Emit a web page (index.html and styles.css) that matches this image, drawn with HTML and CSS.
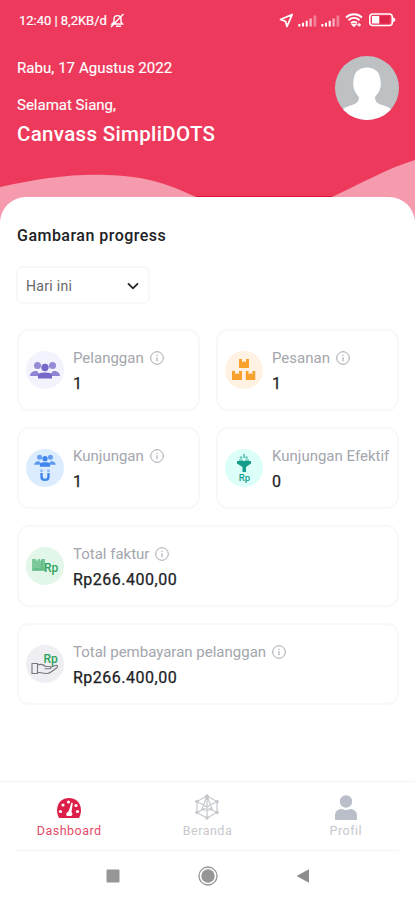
FILE: index.html
```html
<!DOCTYPE html>
<html lang="id">
<head>
<meta charset="utf-8">
<meta name="viewport" content="width=device-width, initial-scale=1">
<title>Dashboard</title>
<link rel="stylesheet" href="styles.css">
</head>
<body>
<svg class="defs" width="0" height="0" aria-hidden="true">
  <symbol id="info" viewBox="0 0 14 14"><circle cx="7" cy="7" r="6.3" fill="none" stroke="currentColor"/><path d="M7 6.3v4M7 3.7v1.2" stroke="currentColor" stroke-width="1.1"/></symbol>
  <symbol id="signal" viewBox="0 0 19 13"><path d="M.4 10h2v2.500h-2zM4 8.800h2v3.700H4zM7.700 6.800h2v5.700h-2z" fill="#fff"/><path d="M11.400 4.500h2.400v8h-2.400z" fill="#f9b0bf"/><path d="M15.500 1.500h2.800v11h-2.800z" fill="#f27e97"/></symbol>
  <symbol id="people" viewBox="0 0 30 18"><circle cx="7.500" cy="4.500" r="3.500" opacity=".75"/><circle cx="22.500" cy="4.500" r="3.500" opacity=".75"/><path d="M0 15c.3-4 3.500-5.500 7-5l4 5zM30 15c-.3-4-3.500-5.500-7-5l-4 5z" opacity=".8"/><circle cx="15" cy="6.500" r="3.700"/><path d="M8 17.500V15c0-3 3-3.500 7-3.500s7 .5 7 3.500v2.500z"/></symbol>
  <symbol id="box" viewBox="0 0 10 9"><path d="M0 0h3v3.200l2-1 2 1V0h3v9H0z"/></symbol>
</svg>
<header class="header">
  <svg class="waves" viewBox="0 0 415 62"><path d="M0 28C38 20 69 15 106 16C149 17 172 27 196 38V62H0zM332 38C356 27 388 9 415 1V62H332z" fill="#f59bad"/><path d="M196 37h136v2H196z" fill="#e0143f"/></svg>
  <div class="status">
    <span class="clock">12:40 | 8,2KB/d</span>
    <svg class="bell" width="15" height="15" viewBox="0 0 15 15" fill="none" stroke="#fff" stroke-width="1.400"><path d="M2 11h10.500L11 9V5.800C11 1.500 4 1.500 4 5.800V9zM6 13.300h5M1 14L13.500 1"/></svg>
    <span class="spacer"></span>
    <svg class="location" width="15" height="15" viewBox="0 0 15 15" fill="none" stroke="#fff" stroke-width="1.800" stroke-linejoin="round"><path d="M13.200 1.500L1.500 6.500l5 1.800L8 13.500z"/></svg>
    <svg class="signal" width="19" height="13"><use href="#signal"/></svg>
    <svg class="signal" width="19" height="13"><use href="#signal"/></svg>
    <svg class="wifi" width="18" height="14" viewBox="0 0 18 14" fill="none" stroke="#fff" stroke-width="1.900"><path d="M1 4.500C5.500.2 12.500.2 17 4.500M3.500 7.300c3.300-3 7.700-3 11 0M6 10c1.900-1.700 4.100-1.700 6 0"/><path d="M7 11.300h4L9 13.500zM14 10v3.500M12.300 11.800h3.700" fill="#fff" stroke-width="1.200"/></svg>
    <svg width="27" height="14" viewBox="0 0 27 14"><rect x=".8" y="1" width="22.500" height="11.500" rx="3" fill="none" stroke="#fff" stroke-width="1.600"/><path d="M3 3h7.500v7.500H3z" fill="#fff"/><path d="M10.500 3h10v7.500h-10z" fill="#dd254a"/><path d="M24 4.500c3 .5 3 4 0 4.500z" fill="#fff"/></svg>
  </div>
  <div class="greeting">
    <div>
      <p class="date">Rabu, 17 Agustus 2022</p>
      <p class="hello">Selamat Siang,</p>
      <h1 class="name">Canvass SimpliDOTS</h1>
    </div>
    <svg class="avatar" viewBox="0 0 64 64"><defs><clipPath id="face"><circle cx="32" cy="32" r="32"/></clipPath></defs><g clip-path="url(#face)"><path d="M0 0h64v64H0z" fill="#bdc1c4"/><path d="M19 22C20 8 44 8 45 22C46 25 46 30 45 33C44 37 41 39 40 41C40 46 43 48 47 49C52 50 55 52 57 54V66H7V54C10 51 14 50 17 49C21 48 24 46 24 41C22 39 20 36 19 33C18 30 18 25 19 22z" fill="#fff"/></g></svg>
  </div>
</header>
<main class="sheet">
  <h2 class="title">Gambaran progress</h2>
  <div class="select"><span>Hari ini</span><svg width="12" height="8" viewBox="0 0 12 8"><path d="M1 1.300l5 5 5-5" fill="none" stroke="#222" stroke-width="1.800"/></svg></div>
  <section class="cards">
    <article class="card">
      <div class="badge violet"><svg width="30" height="18" fill="#7568c8"><use href="#people"/></svg></div>
      <div class="info-text"><p class="label">Pelanggan <svg class="info"><use href="#info"/></svg></p><p class="value">1</p></div>
    </article>
    <article class="card">
      <div class="badge orange"><svg width="24" height="22" viewBox="0 0 24 22" fill="#f9a12d"><use href="#box" x="7" y="0" width="10" height="9"/><use href="#box" x="0" y="12" width="10" height="9"/><use href="#box" x="13.500" y="12" width="10" height="9"/></svg></div>
      <div class="info-text"><p class="label">Pesanan <svg class="info"><use href="#info"/></svg></p><p class="value">1</p></div>
    </article>
    <article class="card">
      <div class="badge blue"><svg width="22" height="28" viewBox="0 0 22 28" fill="#3f86ed"><use href="#people" x="0" y="0" width="22" height="13"/><path d="M7.500 19v3.500c0 4.500 7 4.500 7 0V19" fill="none" stroke="#3f86ed" stroke-width="2.400"/><path d="M6.300 15.500h2.400V18H6.300zM13.300 15.500h2.400V18h-2.400z" opacity=".5"/></svg></div>
      <div class="info-text"><p class="label">Kunjungan <svg class="info"><use href="#info"/></svg></p><p class="value">1</p></div>
    </article>
    <article class="card">
      <div class="badge teal"><svg width="16" height="30" viewBox="0 0 16 30" fill="#149d8b"><path d="M1 8h14v2.500l-5 3.500v5H6.500v-5L1 10.500z"/><circle cx="5" cy="4.500" r="1.300" opacity=".6"/><circle cx="10.500" cy="4.500" r="1.300" opacity=".6"/><path d="M3 6.500h4v1.200H3zM9 6.500h4v1.200H9zM7.300 1h1.500v4H7.300z" opacity=".7"/><text x="2.800" y="28" class="rp-small">Rp</text></svg></div>
      <div class="info-text"><p class="label">Kunjungan Efektif</p><p class="value">0</p></div>
    </article>
    <article class="card wide">
      <div class="badge green"><svg width="28" height="20" viewBox="0 0 28 20"><path d="M1 3h4v2l2-1V3h2v2l3-2h2v12H1z" fill="#7bc99b"/><path d="M3 13h10M11 3v9" stroke="#4fb47a"/><text x="13" y="16" class="rp">Rp</text></svg></div>
      <div class="info-text"><p class="label">Total faktur <svg class="info"><use href="#info"/></svg></p><p class="value">Rp266.400,00</p></div>
    </article>
    <article class="card wide">
      <div class="badge gray"><svg width="28" height="24" viewBox="0 0 28 24"><text x="12.500" y="11" class="rp">Rp</text><path d="M1 11.500h5.500v10H1zM6.500 13c4-1.500 6-.5 8 1.500h4c2 0 2 2.300 0 2.300h-5M19 15.500l5.500-2c2-.5 3 1 1 2.500L20 20c-2 1.500-3 1.800-5 1.500l-8.500-1.200" fill="none" stroke="#77787d" stroke-width="1.100"/></svg></div>
      <div class="info-text"><p class="label">Total pembayaran pelanggan <svg class="info"><use href="#info"/></svg></p><p class="value">Rp266.400,00</p></div>
    </article>
  </section>
</main>
<nav class="tabs">
  <a class="tab active"><svg width="26" height="22" viewBox="0 0 26 22"><path d="M3 21C-2 11 3 1 13 1S28 11 23 21z" fill="#dc1f49"/><g fill="#fff"><circle cx="4.500" cy="14.500" r="1.600"/><circle cx="7" cy="8" r="1.600"/><circle cx="12.500" cy="5" r="1.600"/><circle cx="20" cy="8.500" r="1.600"/><circle cx="21.500" cy="14.500" r="1.600"/><path d="M15.500 5.500l1.300.4-1.300 9c1.500 1.500 1 3.600-.5 4.100h-4c-1.500-1-1-3.500 1.500-4.600z"/></g></svg><span>Dashboard</span></a>
  <a class="tab"><svg width="26" height="26" viewBox="0 0 26 26" fill="none" stroke="#c5c8cd" stroke-width="1.200"><path d="M13 2l10 5.500v11L13 24 3 18.500v-11zM13 2v22M3 7.500l20 11M23 7.500l-20 11M13 2L7.500 16h11z"/><g fill="#c5c8cd" stroke="none"><circle cx="13" cy="2" r="1.800"/><circle cx="23" cy="7.500" r="1.800"/><circle cx="23" cy="18.500" r="1.800"/><circle cx="13" cy="24" r="1.800"/><circle cx="3" cy="18.500" r="1.800"/><circle cx="3" cy="7.500" r="1.800"/></g></svg><span>Beranda</span></a>
  <a class="tab"><svg width="22" height="25" viewBox="0 0 22 25" fill="#b9bec9"><circle cx="11" cy="6.500" r="6.200"/><path d="M0 24v-3c0-5 3-7 7-7 2.500 1.200 5.500 1.200 8 0 4 0 7 2 7 7v3q0 1-1 1H1q-1 0-1-1z"/></svg><span>Profil</span></a>
</nav>
<footer class="system">
  <svg width="14" height="14" viewBox="0 0 14 14"><rect x=".5" y=".5" width="13" height="13" rx="1" fill="#969696"/></svg>
  <svg width="20" height="20" viewBox="0 0 20 20"><circle cx="10" cy="10" r="9" fill="none" stroke="#969696" stroke-width="1.300"/><circle cx="10" cy="10" r="6.700" fill="#969696"/></svg>
  <svg width="14" height="14" viewBox="0 0 14 14"><path d="M.5 7L13 .2v13.600z" fill="#8d8d8d"/></svg>
</footer>
</body>
</html>
```
FILE: styles.css
```css
* { box-sizing: border-box; }
body { margin: 0; width: 415px; height: 900px; overflow: hidden; display: flex; flex-direction: column; background: #fff; font-family: Roboto, "Liberation Sans", sans-serif; color: #202124; }
p, h1, h2 { margin: 0; }
svg { display: block; flex: none; }
.defs { position: absolute; }
.header { position: relative; height: 221px; flex: none; background: #ed3a5c; color: #fff; }
.waves { position: absolute; left: 0; bottom: 0; width: 415px; height: 62px; }
.status { position: relative; display: flex; align-items: center; height: 40px; padding: 0 19px 0 19px; }
.clock { font-size: 13px; letter-spacing: -.02px; -webkit-text-stroke: .2px #fff; }
.bell { margin-left: 3px; }
.spacer { flex: 1; }
.signal { margin-left: 4px; }
.wifi { margin: 0 6px 0 5px; }
.greeting { position: relative; display: flex; justify-content: space-between; padding: 16px 16px 0 17px; }
.date, .hello { font-size: 15px; line-height: 22px; -webkit-text-stroke: .15px; }
.date { margin-top: 1px; letter-spacing: .06px; }
.hello { margin-top: 15px; }
.name { font-size: 20.5px; line-height: 28px; margin-top: 4px; font-weight: 500; letter-spacing: .33px; }
.avatar { width: 64px; height: 64px; }
.sheet { position: relative; flex: none; height: 584px; margin-top: -24px; padding: 27px 16px 0 17px; background: #fff; border-radius: 26px 26px 0 0; }
.title { font-size: 16px; line-height: 24px; font-weight: 500; letter-spacing: .48px; }
.select { display: flex; align-items: center; justify-content: space-between; width: 134px; height: 38px; margin: 18px 0 0 -1px; padding: 1px 9px 0 8px; border: 2px solid #f8f8f9; border-radius: 6px; font-size: 14px; color: #66676a; letter-spacing: .3px; }
.cards { display: grid; grid-template-columns: 183px 183px; grid-auto-rows: 82px; gap: 16px; margin-top: 25px; }
.card { display: flex; align-items: center; border: 2px solid #f8f8f9; border-radius: 12px; padding-left: 7px; }
.info-text { margin-left: 9px; padding-top: 2px; }
.wide { grid-column: 1 / -1; }
.badge { display: flex; align-items: center; justify-content: center; width: 38px; height: 38px; border-radius: 50%; }
.violet { background: #f3f3fd; }
.orange { background: #fff2e3; }
.blue { background: #dcecff; }
.teal { background: #dcfff9; }
.green { background: #e3f6ea; }
.gray { background: #eeeef3; }
.label { display: flex; align-items: center; gap: 6px; font-size: 15px; line-height: 22px; letter-spacing: 0; color: #a3a6ad; white-space: nowrap; }
.info { width: 14px; height: 14px; }
.value { font-size: 16px; line-height: 24px; margin-top: 3px; letter-spacing: .5px; -webkit-text-stroke: .25px; }
.rp, .rp-small { font-family: Roboto, sans-serif; font-weight: 500; fill: #2ba45c; font-size: 12px; }
.rp-small { font-size: 9.5px; fill: #149d8b; }
.tabs { display: grid; grid-template-columns: repeat(3, 1fr); height: 69px; flex: none; border-top: 1px solid #f5f5f6; }
.tab { display: flex; flex-direction: column; align-items: center; justify-content: flex-end; padding-bottom: 11px; font-size: 12.5px; line-height: 16px; letter-spacing: .5px; color: #c6c8cd; gap: 3px; }
.tab.active { color: #e64b68; gap: 4px; }
.system { display: flex; justify-content: center; align-items: center; gap: 78px; height: 51px; margin: 0 16px; border-top: 1px solid #f5f5f6; }
```
